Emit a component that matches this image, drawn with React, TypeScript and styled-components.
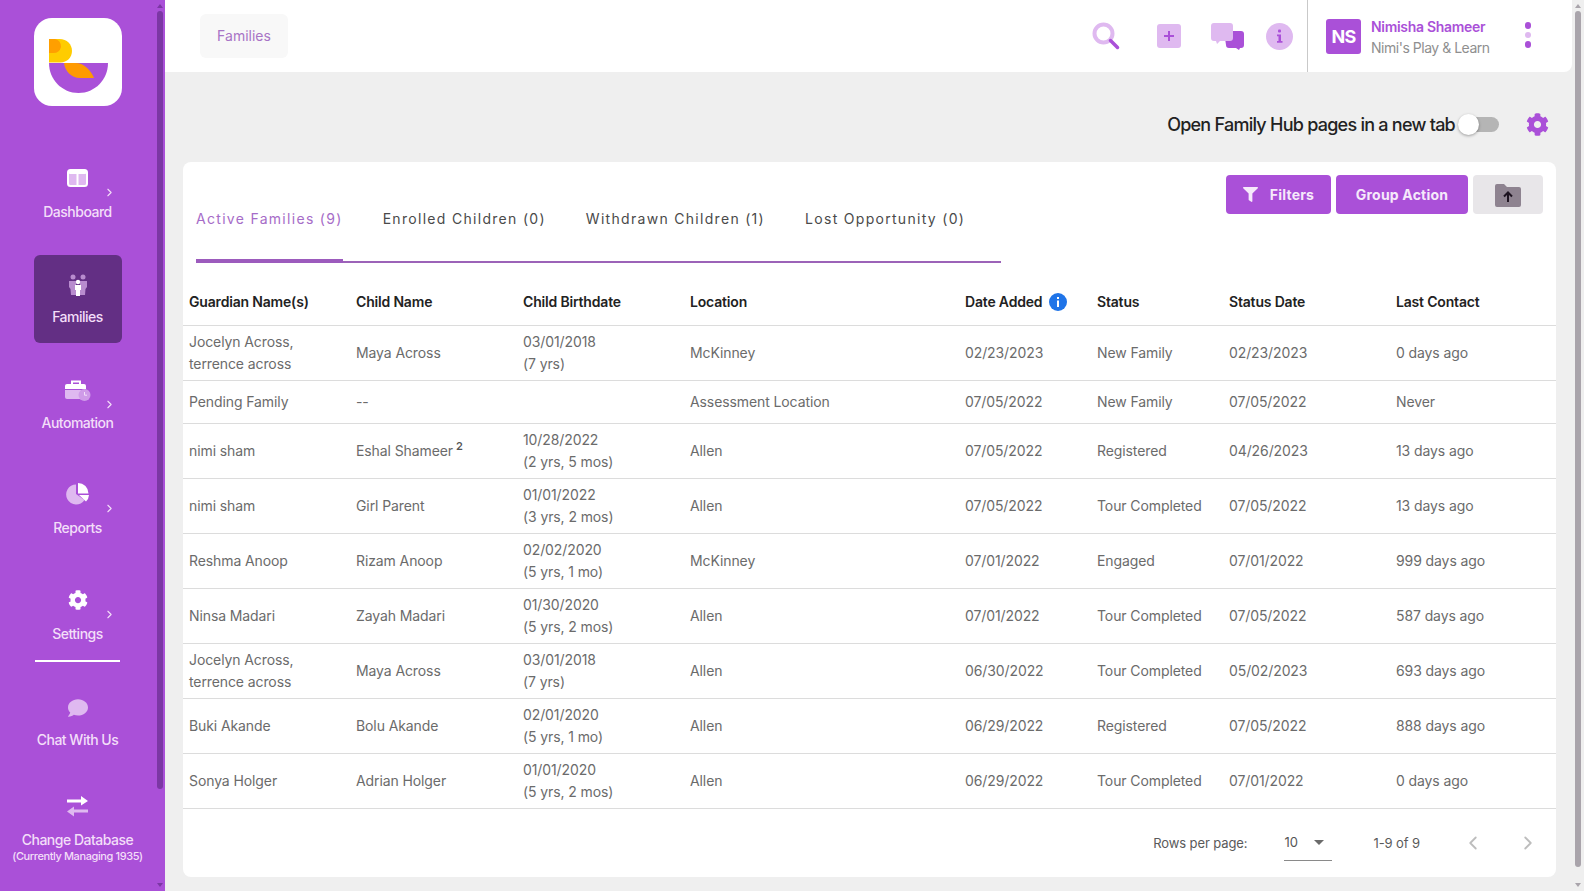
import React from 'react';
import styled, { createGlobalStyle } from 'styled-components';
import { FaCog, FaFilter, FaComment } from 'react-icons/fa';
import { ChevronRight, ChevronLeft } from 'lucide-react';

const GlobalStyle = createGlobalStyle`
  html, body, #root { height: 100%; margin: 0; padding: 0; }
  body {
    font-family: Inter, "Noto Sans", "Liberation Sans", sans-serif;
    background: #efefef;
    overflow: hidden;
  }
  * { box-sizing: border-box; }
`;

const Page = styled.div`
  display: flex;
  width: 1584px;
  height: 891px;
  overflow: hidden;
`;

const Sidebar = styled.aside`
  width: 165px;
  height: 100%;
  flex: none;
  display: flex;
  background: #aa50d8;
`;

const SideColumn = styled.div`
  width: 155px;
  flex: none;
  display: flex;
  flex-direction: column;
  align-items: center;
  padding-top: 18px;
`;

const Scrollbar = styled.div<{ $light?: boolean }>`
  width: ${(p) => (p.$light ? '12px' : '10px')};
  flex: none;
  height: 100%;
  display: flex;
  flex-direction: column;
  align-items: center;
  justify-content: space-between;
  padding: 4px ${(p) => (p.$light ? '0' : '2px 4px 2px')};
`;

const ScrollThumb = styled.div<{ $light?: boolean; $height: number }>`
  width: 6px;
  height: ${(p) => p.$height}px;
  margin-top: 1px;
  border-radius: 3px;
  background: ${(p) => (p.$light ? '#a9a4ab' : '#7b37a4')};
`;

const ScrollArrow = styled.div<{ $down?: boolean; $light?: boolean }>`
  width: 0;
  height: 0;
  border-left: 3.5px solid transparent;
  border-right: 3.5px solid transparent;
  ${(p) => (p.$down ? 'border-top' : 'border-bottom')}: 4px solid ${(p) => (p.$light ? '#a9a4ab' : '#7b37a4')};
`;

const ThumbStack = styled.div`
  flex: 1;
  display: flex;
  flex-direction: column;
  margin-top: 2px;
`;

const LogoBox = styled.div`
  width: 88px;
  height: 88px;
  border-radius: 18px;
  background: #fff;
  flex: none;
`;

const NavItem = styled.div<{ $active?: boolean; $top: number }>`
  position: relative;
  width: 88px;
  height: 88px;
  flex: none;
  margin-top: ${(p) => p.$top}px;
  border-radius: 6px;
  display: flex;
  flex-direction: column;
  align-items: center;
  justify-content: center;
  background: ${(p) => (p.$active ? '#632f84' : 'transparent')};
`;

const NavIcon = styled.div`
  height: 26px;
  display: flex;
  align-items: center;
  justify-content: center;
  color: #fff;
`;

const NavLabel = styled.div<{ $tight?: boolean }>`
  margin-top: ${(p) => (p.$tight ? '10px' : '11.5px')};
  font-size: 14px;
  line-height: 18px;
  font-weight: 500;
  letter-spacing: -0.5px;
  color: #f3def9;
  white-space: nowrap;
  text-align: center;
`;

const NavSub = styled.div`
  font-size: 11px;
  line-height: 14px;
  font-weight: 500;
  letter-spacing: -0.4px;
  color: #f3def9;
  white-space: nowrap;
  text-align: center;
`;

const NavChevron = styled.div`
  position: absolute;
  top: 37px;
  right: 6px;
  display: flex;
  color: #f3def9;
`;

const SideRule = styled.div`
  width: 85px;
  height: 2px;
  flex: none;
  margin-top: 1px;
  background: #fff;
`;

const Main = styled.div`
  flex: 1;
  min-width: 0;
  display: flex;
  flex-direction: column;
`;

const TopBar = styled.header`
  height: 72px;
  flex: none;
  display: flex;
  align-items: center;
  background: #fff;
  border-bottom-right-radius: 8px;
  padding-left: 35px;
`;

const Crumb = styled.div`
  width: 88px;
  height: 44px;
  border-radius: 6px;
  background: #f8f8f8;
  display: flex;
  align-items: center;
  justify-content: center;
  padding-bottom: 2px;
  font-size: 14px;
  color: #a874c6;
`;

const TopIcons = styled.div`
  margin-left: auto;
  display: flex;
  align-items: center;
  height: 100%;
`;

const TopIcon = styled.div<{ $width: number; $left?: number }>`
  width: ${(p) => p.$width}px;
  margin-left: ${(p) => p.$left ?? 0}px;
  display: flex;
  justify-content: center;
  align-items: center;
`;

const UserBlock = styled.div`
  height: 100%;
  width: 265px;
  margin-left: 14px;
  border-left: 1px solid #c9c9c9;
  display: flex;
  align-items: center;
  padding-left: 18px;
`;

const Avatar = styled.div`
  width: 35px;
  height: 35px;
  border-radius: 3px;
  background: #aa50d8;
  color: #fff;
  font-size: 18px;
  font-weight: 700;
  letter-spacing: -0.8px;
  display: flex;
  align-items: center;
  justify-content: center;
`;

const UserText = styled.div`
  margin-left: 10px;
  display: flex;
  flex-direction: column;
  gap: 3px;
  padding-top: 3px;
`;

const UserName = styled.div`
  font-size: 14px;
  line-height: 18px;
  font-weight: 600;
  letter-spacing: -0.3px;
  color: #aa50d8;
`;

const UserOrg = styled.div`
  font-size: 14px;
  line-height: 18px;
  letter-spacing: -0.48px;
  color: #8f8f8f;
`;

const Dots = styled.div`
  margin-left: 35px;
  margin-bottom: 2px;
  display: flex;
  flex-direction: column;
  gap: 3px;
`;

const Dot = styled.span<{ $pale?: boolean }>`
  width: 6.5px;
  height: 6.5px;
  border-radius: 50%;
  background: ${(p) => (p.$pale ? '#dfb9f0' : '#aa50d8')};
`;

const Content = styled.main`
  flex: 1;
  min-height: 0;
  padding: 0 16px 14px 18px;
  display: flex;
  flex-direction: column;
`;

const ToggleRow = styled.div`
  height: 90px;
  flex: none;
  display: flex;
  align-items: center;
  justify-content: flex-end;
  padding: 15px 7px 0 0;
`;

const ToggleLabel = styled.span`
  font-size: 18px;
  font-weight: 500;
  letter-spacing: -0.75px;
  color: #222;
`;

const ToggleTrack = styled.div`
  position: relative;
  width: 34px;
  height: 15px;
  margin: 0 27px 0 10px;
  border-radius: 8px;
  background: #b5b5b5;
`;

const ToggleKnob = styled.div`
  position: absolute;
  left: -7px;
  top: -3px;
  width: 21px;
  height: 21px;
  border-radius: 50%;
  background: #fff;
  box-shadow: 0 1px 3px rgba(0, 0, 0, 0.35);
`;

const Card = styled.section`
  flex: 1;
  min-height: 0;
  background: #fff;
  border-radius: 8px;
  display: flex;
  flex-direction: column;
`;

const CardHead = styled.div`
  display: flex;
  justify-content: space-between;
  align-items: flex-start;
  padding: 13px 13px 0 13px;
  height: 101px;
  flex: none;
`;

const Tabs = styled.div`
  width: 805px;
  height: 88px;
  display: flex;
  align-items: flex-end;
  gap: 40px;
  border-bottom: 2px solid #9c63b8;
`;

const Tab = styled.div<{ $active?: boolean }>`
  height: 61px;
  margin-bottom: -2px;
  padding-top: 7px;
  font-size: 14px;
  line-height: 20px;
  letter-spacing: 1.3px;
  white-space: nowrap;
  color: ${(p) => (p.$active ? '#a66cc8' : '#4a4a4a')};
  border-bottom: 4px solid ${(p) => (p.$active ? '#9c5bbd' : 'transparent')};
`;

const Actions = styled.div`
  display: flex;
  gap: 5px;
`;

const ActionButton = styled.button<{ $width: number }>`
  width: ${(p) => p.$width}px;
  height: 39px;
  border: 0;
  border-radius: 4px;
  background: #aa50d8;
  color: #f6e9fb;
  font-family: inherit;
  font-size: 14px;
  font-weight: 700;
  letter-spacing: 0.2px;
  display: flex;
  align-items: center;
  justify-content: center;
  gap: 12px;
`;

const UploadButton = styled(ActionButton)`
  background: #e8e6e9;
`;

const Table = styled.table`
  width: 100%;
  table-layout: fixed;
  border-collapse: collapse;
`;

const HeadCell = styled.th<{ $width?: number }>`
  width: ${(p) => (p.$width ? `${p.$width}px` : 'auto')};
  height: 62px;
  padding: 16px 6px 0;
  text-align: left;
  font-size: 14px;
  font-weight: 600;
  letter-spacing: -0.18px;
  color: #222;
  border-bottom: 1px solid #dcdcdc;
  white-space: nowrap;
`;

const HeadInner = styled.span`
  display: inline-flex;
  align-items: center;
  gap: 7px;
`;

const Cell = styled.td`
  padding: 5px 6px;
  height: 43px;
  font-size: 14px;
  line-height: 22px;
  letter-spacing: -0.1px;
  color: #6b6b6b;
  border-bottom: 1px solid #dcdcdc;
`;

const Sup = styled.sup`
  font-size: 11px;
  font-weight: 600;
  line-height: 0;
  margin-left: 3px;
  color: #555;
  vertical-align: 6px;
`;

const Footer = styled.div`
  flex: 1;
  display: flex;
  align-items: center;
  justify-content: flex-end;
  padding: 0 17px 0 0;
  font-size: 13px;
  letter-spacing: -0.1px;
  color: #5a5a5a;
`;

const RowsSelect = styled.div`
  width: 48px;
  height: 36px;
  margin: 0 41px 0 37px;
  border-bottom: 1px solid #8a8a8a;
  display: flex;
  align-items: center;
  justify-content: space-between;
  padding-right: 8px;
  color: #555;
`;

const Caret = styled.span`
  width: 0;
  height: 0;
  border-left: 5.5px solid transparent;
  border-right: 5.5px solid transparent;
  border-top: 5.5px solid #6b6b6b;
`;

const Pager = styled.div`
  display: flex;
  align-items: center;
  gap: 33px;
  margin-left: 42px;
  color: #bdbdbd;
`;

const IconPale = '#dfb9f0';
const IconStrong = '#aa50d8';

const Logo = () => (
  <svg width="88" height="88" viewBox="0 0 88 88">
    <path d="M15 44.5V21h10.5C33 21 38 26.500 38 33s-5 11.500-11.500 11.500z" fill="#ffcc00" />
    <path d="M15 21h6a8 8 0 0 1 6 8 8 8 0 0 1-8 6h-4z" fill="#ff9f00" />
    <path d="M15 45h59c0 16.500-13 30-29.500 30S15 61.500 15 45z" fill="#aa50d8" />
    <path d="M30 45h11c10 0 16 8 19 15H46c-9 0-15-7-16-15z" fill="#ff9a00" />
  </svg>
);

const DashIcon = () => (
  <svg width="21" height="18" viewBox="0 0 21 18">
    <rect x="1" y="1" width="19" height="16" rx="2.500" fill={IconPale} stroke="#fff" strokeWidth="2" />
    <rect x="1" y="1" width="19" height="4" rx="2" fill="#fff" />
    <rect x="9.500" y="2" width="2" height="15" fill="#fff" />
  </svg>
);

const FamilyIcon = () => (
  <svg width="20" height="22" viewBox="0 0 20 22">
    <g fill="#b88cce">
      <circle cx="5" cy="3" r="2.500" />
      <circle cx="15" cy="3" r="2.500" />
      <path d="M1 7h7v14H3l-.5-6L1 13z" />
      <path d="M12 7h7v6l-1.500 2-.5 6h-5z" />
    </g>
    <circle cx="10" cy="8" r="2.200" fill="#fff" />
    <path d="M7 11h6v5h-1v6H8v-6H7z" fill="#fff" />
  </svg>
);

const AutomationIcon = () => (
  <svg width="26" height="22" viewBox="0 0 26 22">
    <path d="M7 4V1.500h8V4" fill="none" stroke="#fff" strokeWidth="2" />
    <path d="M0 6a2 2 0 0 1 2-2h17a2 2 0 0 1 2 2v3H0z" fill="#fff" />
    <path d="M0 10h16v9H2a2 2 0 0 1-2-2z" fill={IconPale} />
    <circle cx="19.500" cy="15" r="6" fill="#cf9be8" />
    <path d="M19.500 12v3.200h2.500" fill="none" stroke="#f3def9" strokeWidth="1" />
  </svg>
);

const PieIcon = () => (
  <svg width="23" height="22" viewBox="0 0 23 22">
    <path d="M10 1.500A10 10 0 1 0 18.500 17L10 11z" fill={IconPale} />
    <path d="M12 0a10.500 10.500 0 0 1 10.500 10.500H12z" fill="#fff" />
    <path d="M13 12h10a10 10 0 0 1-3 6.500z" fill="#fff" />
  </svg>
);

const SwapIcon = () => (
  <svg width="21" height="21" viewBox="0 0 21 21">
    <path d="M0 4.500h14V1l7 5-7 4.500V7.500H0z" fill="#fff" transform="translate(0 -1)" />
    <path d="M21 13.500H7V10.500L0 15.500 7 20.500V16.500h14z" fill={IconPale} />
  </svg>
);

const SearchIcon = () => (
  <svg width="28" height="28" viewBox="0 0 28 28">
    <circle cx="11.500" cy="11.500" r="9" fill="#fff" stroke={IconPale} strokeWidth="4" />
    <path d="M18.500 18.500l7 7" stroke={IconStrong} strokeWidth="3.500" strokeLinecap="round" />
  </svg>
);

const PlusIcon = () => (
  <svg width="24" height="24" viewBox="0 0 24 24">
    <rect width="24" height="24" rx="3" fill={IconPale} />
    <path d="M12 7v10M7 12h10" stroke={IconStrong} strokeWidth="2" />
  </svg>
);

const ChatIcon = () => (
  <svg width="34" height="27" viewBox="0 0 34 27">
    <path d="M13 8h17a3 3 0 0 1 3 3v11a3 3 0 0 1-3 3h-1l-1 2-3-2h-7a3 3 0 0 1-3-3z" fill={IconStrong} />
    <path d="M3 0h16a3 3 0 0 1 3 3v12a3 3 0 0 1-3 3H9l-3 3-1-3H3a3 3 0 0 1-3-3V3a3 3 0 0 1 3-3z" fill={IconPale} />
  </svg>
);

const InfoIcon = () => (
  <svg width="27" height="27" viewBox="0 0 27 27">
    <circle cx="13.500" cy="13.500" r="13.500" fill={IconPale} />
    <rect x="12" y="6.500" width="3" height="3" rx="1" fill={IconStrong} />
    <path d="M11 11.500h4v6.500h1.500v1.800h-5.500V18h1.500v-4.700H11z" fill={IconStrong} />
  </svg>
);

const BlueInfo = () => (
  <svg width="18" height="18" viewBox="0 0 18 18">
    <circle cx="9" cy="9" r="9" fill="#1f74e8" />
    <rect x="8" y="4" width="2" height="2" fill="#fff" />
    <rect x="8" y="7.500" width="2" height="6.500" fill="#fff" />
  </svg>
);

const UploadIcon = () => (
  <svg width="26" height="24" viewBox="0 0 26 24">
    <path d="M0 3a2 2 0 0 1 2-2h7l3 3h12a2 2 0 0 1 2 2v16a2 2 0 0 1-2 2H2a2 2 0 0 1-2-2z" fill="#8e8390" />
    <path d="M13 19v-9M9 13.500L13 9.500l4 4" fill="none" stroke="#1d1320" strokeWidth="2" />
  </svg>
);

type Row = {
  guardian: React.ReactNode;
  child: React.ReactNode;
  birth: React.ReactNode;
  location: string;
  added: string;
  status: string;
  statusDate: string;
  contact: string;
};

const twoLines = (a: string, b: string) => (
  <>
    {a}
    <br />
    {b}
  </>
);

const rows: Row[] = [
  { guardian: twoLines('Jocelyn Across,', 'terrence across'), child: 'Maya Across', birth: twoLines('03/01/2018', '(7 yrs)'), location: 'McKinney', added: '02/23/2023', status: 'New Family', statusDate: '02/23/2023', contact: '0 days ago' },
  { guardian: 'Pending Family', child: '--', birth: '', location: 'Assessment Location', added: '07/05/2022', status: 'New Family', statusDate: '07/05/2022', contact: 'Never' },
  { guardian: 'nimi sham', child: <>Eshal Shameer<Sup>2</Sup></>, birth: twoLines('10/28/2022', '(2 yrs, 5 mos)'), location: 'Allen', added: '07/05/2022', status: 'Registered', statusDate: '04/26/2023', contact: '13 days ago' },
  { guardian: 'nimi sham', child: 'Girl Parent', birth: twoLines('01/01/2022', '(3 yrs, 2 mos)'), location: 'Allen', added: '07/05/2022', status: 'Tour Completed', statusDate: '07/05/2022', contact: '13 days ago' },
  { guardian: 'Reshma Anoop', child: 'Rizam Anoop', birth: twoLines('02/02/2020', '(5 yrs, 1 mo)'), location: 'McKinney', added: '07/01/2022', status: 'Engaged', statusDate: '07/01/2022', contact: '999 days ago' },
  { guardian: 'Ninsa Madari', child: 'Zayah Madari', birth: twoLines('01/30/2020', '(5 yrs, 2 mos)'), location: 'Allen', added: '07/01/2022', status: 'Tour Completed', statusDate: '07/05/2022', contact: '587 days ago' },
  { guardian: twoLines('Jocelyn Across,', 'terrence across'), child: 'Maya Across', birth: twoLines('03/01/2018', '(7 yrs)'), location: 'Allen', added: '06/30/2022', status: 'Tour Completed', statusDate: '05/02/2023', contact: '693 days ago' },
  { guardian: 'Buki Akande', child: 'Bolu Akande', birth: twoLines('02/01/2020', '(5 yrs, 1 mo)'), location: 'Allen', added: '06/29/2022', status: 'Registered', statusDate: '07/05/2022', contact: '888 days ago' },
  { guardian: 'Sonya Holger', child: 'Adrian Holger', birth: twoLines('01/01/2020', '(5 yrs, 2 mos)'), location: 'Allen', added: '06/29/2022', status: 'Tour Completed', statusDate: '07/01/2022', contact: '0 days ago' },
];

export default function App() {
  return (
    <Page>
      <GlobalStyle />
      <Sidebar>
        <SideColumn>
          <LogoBox>
            <Logo />
          </LogoBox>
          <NavItem $top={43}>
            <NavIcon><DashIcon /></NavIcon>
            <NavLabel>Dashboard</NavLabel>
            <NavChevron><ChevronRight size={13} /></NavChevron>
          </NavItem>
          <NavItem $active $top={18}>
            <NavIcon><FamilyIcon /></NavIcon>
            <NavLabel $tight>Families</NavLabel>
          </NavItem>
          <NavItem $top={18}>
            <NavIcon><AutomationIcon /></NavIcon>
            <NavLabel $tight>Automation</NavLabel>
            <NavChevron><ChevronRight size={13} /></NavChevron>
          </NavItem>
          <NavItem $top={16}>
            <NavIcon><PieIcon /></NavIcon>
            <NavLabel>Reports</NavLabel>
            <NavChevron><ChevronRight size={13} /></NavChevron>
          </NavItem>
          <NavItem $top={18}>
            <NavIcon><FaCog size={20} /></NavIcon>
            <NavLabel>Settings</NavLabel>
            <NavChevron><ChevronRight size={13} /></NavChevron>
          </NavItem>
          <SideRule />
          <NavItem $top={16}>
            <NavIcon><FaComment size={20} color={IconPale} /></NavIcon>
            <NavLabel $tight>Chat With Us</NavLabel>
          </NavItem>
          <NavItem $top={18}>
            <NavIcon><SwapIcon /></NavIcon>
            <NavLabel>Change Database</NavLabel>
            <NavSub>(Currently Managing 1935)</NavSub>
          </NavItem>
        </SideColumn>
        <Scrollbar>
          <ScrollArrow />
          <ThumbStack><ScrollThumb $height={778} /></ThumbStack>
          <ScrollArrow $down />
        </Scrollbar>
      </Sidebar>
      <Main>
        <TopBar>
          <Crumb>Families</Crumb>
          <TopIcons>
            <TopIcon $width={28}><SearchIcon /></TopIcon>
            <TopIcon $width={24} $left={37}><PlusIcon /></TopIcon>
            <TopIcon $width={34} $left={30}><ChatIcon /></TopIcon>
            <TopIcon $width={27} $left={21}><InfoIcon /></TopIcon>
            <UserBlock>
              <Avatar>NS</Avatar>
              <UserText>
                <UserName>Nimisha Shameer</UserName>
                <UserOrg>Nimi's Play &amp; Learn</UserOrg>
              </UserText>
              <Dots>
                <Dot />
                <Dot $pale />
                <Dot />
              </Dots>
            </UserBlock>
          </TopIcons>
        </TopBar>
        <Content>
          <ToggleRow>
            <ToggleLabel>Open Family Hub pages in a new tab</ToggleLabel>
            <ToggleTrack><ToggleKnob /></ToggleTrack>
            <FaCog size={23} color={IconStrong} />
          </ToggleRow>
          <Card>
            <CardHead>
              <Tabs>
                <Tab $active>Active Families (9)</Tab>
                <Tab>Enrolled Children (0)</Tab>
                <Tab>Withdrawn Children (1)</Tab>
                <Tab>Lost Opportunity (0)</Tab>
              </Tabs>
              <Actions>
                <ActionButton $width={105}><FaFilter size={15} />Filters</ActionButton>
                <ActionButton $width={132}>Group Action</ActionButton>
                <UploadButton $width={70}><UploadIcon /></UploadButton>
              </Actions>
            </CardHead>
            <Table>
              <thead>
                <tr>
                  <HeadCell $width={167}>Guardian Name(s)</HeadCell>
                  <HeadCell $width={167}>Child Name</HeadCell>
                  <HeadCell $width={167}>Child Birthdate</HeadCell>
                  <HeadCell $width={275}>Location</HeadCell>
                  <HeadCell $width={132}><HeadInner>Date Added <BlueInfo /></HeadInner></HeadCell>
                  <HeadCell $width={132}>Status</HeadCell>
                  <HeadCell $width={167}>Status Date</HeadCell>
                  <HeadCell>Last Contact</HeadCell>
                </tr>
              </thead>
              <tbody>
                {rows.map((row, i) => (
                  <tr key={i}>
                    <Cell>{row.guardian}</Cell>
                    <Cell>{row.child}</Cell>
                    <Cell>{row.birth}</Cell>
                    <Cell>{row.location}</Cell>
                    <Cell>{row.added}</Cell>
                    <Cell>{row.status}</Cell>
                    <Cell>{row.statusDate}</Cell>
                    <Cell>{row.contact}</Cell>
                  </tr>
                ))}
              </tbody>
            </Table>
            <Footer>
              Rows per page:
              <RowsSelect>10<Caret /></RowsSelect>
              1-9 of 9
              <Pager>
                <ChevronLeft size={22} />
                <ChevronRight size={22} />
              </Pager>
            </Footer>
          </Card>
        </Content>
      </Main>
      <Scrollbar $light>
        <ScrollArrow $light />
        <ThumbStack><ScrollThumb $light $height={856} /></ThumbStack>
        <ScrollArrow $light $down />
      </Scrollbar>
    </Page>
  );
}
